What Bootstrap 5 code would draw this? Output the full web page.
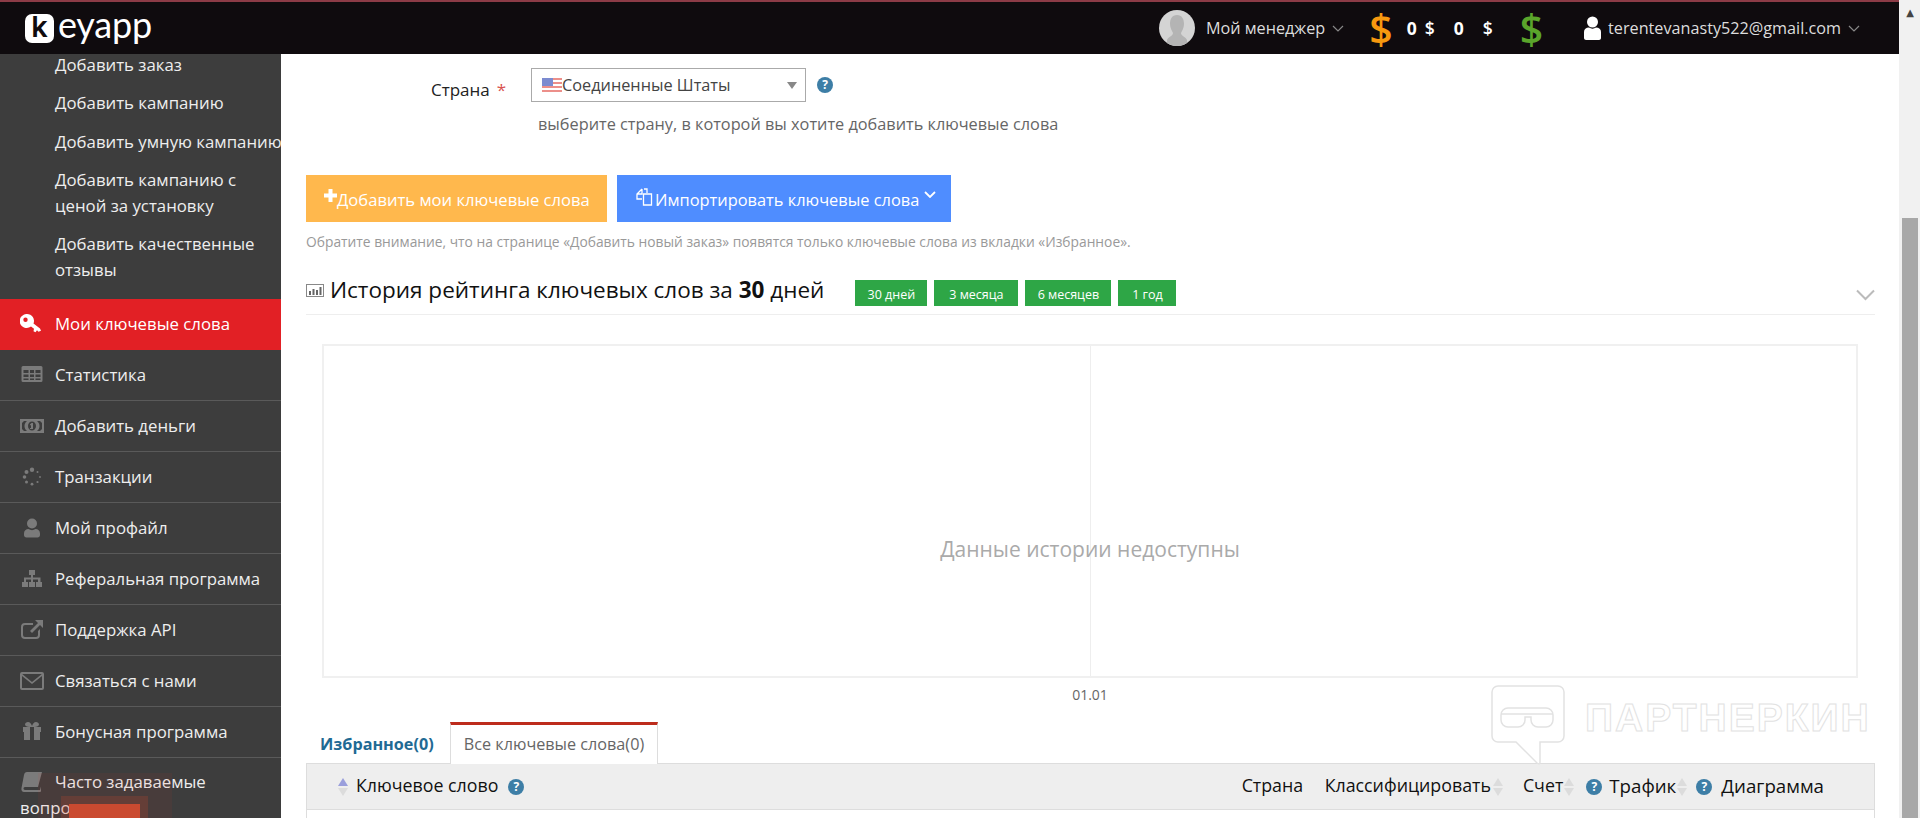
<!DOCTYPE html>
<html lang="ru"><head><meta charset="utf-8"><title>Keyapp</title>
<link href="https://cdn.jsdelivr.net/npm/bootstrap@5.3.0/dist/css/bootstrap.min.css" rel="stylesheet">
<style>
html,body{height:818px;overflow:hidden}
body{font-family:"Open Sans","Noto Sans",sans-serif;font-size:16px;color:#222;background:#fff}
a{text-decoration:none}
.shell{height:818px}
.scroll-track{width:21px;background:#f1f1f1;padding:0 2px 0 3px}
.scroll-arrow{height:218px;color:#444;font-size:10px;line-height:26px;text-align:center;font-family:"DejaVu Sans",sans-serif}
.scroll-thumb{background:#a8a8a8}
.top-bar{height:54px;flex:none;background:#0f0b0e;border-top:2px solid #8c3b46;color:#ddd;padding:0 39px 0 25px}
.logo-k{width:29px;height:29px;background:#fff;color:#0f0b0e;border-radius:7px;font:600 29px/26px "Inter",sans-serif;text-align:center}
.logo-rest{font:400 36px/36px "Lato",sans-serif;color:#fff;margin-left:4px;letter-spacing:-.2px;padding-bottom:8px}
.avatar{width:36px;height:36px;border-radius:50%;background:#d4d4d4;overflow:hidden}
.top-txt{font-size:16.2px;color:#ddd}
.top-chev{margin-left:7px}
.dollar{font-weight:600;font-size:41px;line-height:40px}
.dollar-o{color:#f7990f}.dollar-g{color:#5aa52b}
.bal{font-weight:700;font-size:17.5px;color:#fff;width:10px}
.side{width:281px;background:#3d3d3d;overflow:hidden}
.side-list{margin-top:-9px;padding-bottom:10px}
.sub-link{display:block;color:#eee;padding:6.5px 0 6.5px 55px;line-height:25.5px;font-size:16.8px;white-space:normal}
.sub-link.tight{white-space:nowrap}
.side-item{display:block;color:#eee;height:51px;padding:12px 10px 0 20px;line-height:26px;border-bottom:1px solid #5a5a5a;font-size:16.8px}
.side-item.active-item{background:#e22025;color:#fff;border-bottom-color:#e22025}
.side-item svg{display:inline-block;width:24px;height:20px;margin-right:11px;vertical-align:-4px;fill:#7b7b7b}
.side-item.active-item svg{fill:#fff}
.side-item.last-item{border:0;height:auto;padding-top:11px}
.censor{position:absolute;left:38px;bottom:0;width:134px;height:45px;background:rgba(220,60,40,.07);padding:23px 24px 0 23px}
.censor-mid{height:22px;background:rgba(220,70,40,.2);padding:8px 8px 0 8px}
.censor-in{height:14px;background:#ca4a30}
.content{padding:24px 24px 0 25px;overflow:hidden;position:relative}
.form-line{height:34px}
.lbl{width:225px;flex:none;padding:10px 0 0 125px;line-height:24px;white-space:nowrap;font-size:17px}
.req{color:#d9534f;margin-left:7px}
.sel{width:275px;height:34px;flex:none;border:1px solid #aaa;font-size:16.3px;color:#444;padding:0 7px 0 10px}
.help{width:16px;height:16px;border-radius:50%;background:#3d7ea6;color:#fff;font:700 12px/16px "Open Sans",sans-serif;text-align:center;display:inline-block;flex:none}
.hint{margin:10px 0 0 232px;color:#666;line-height:24px;font-size:16.3px;white-space:nowrap}
.btn-flat{height:47px;border:0;border-radius:0;color:#fff;font-size:16.6px;padding:4px 0 0;line-height:1}
.btn-add{width:301px;background:#ffb84d;padding-left:18px}
.btn-imp{width:334px;background:#4f8dff;padding-left:19px;margin-left:10px;font-size:16.4px}
.btn-row{margin-top:39px}
.btn-flat:hover{color:#fff}
.note{font-size:13.8px;line-height:18px;color:#999;margin-top:11px;white-space:nowrap}
.hist-head{height:50px;margin-top:14px;border-bottom:1px solid #eee;padding-bottom:9px}
.hist-title{font-size:22.5px;line-height:30px;color:#111;margin-left:6px;white-space:nowrap}
.pill{height:26px;background:#2ea646;color:#fff;font-size:12.5px;line-height:30px;text-align:center;margin-top:15px}
.pills{margin-left:31px;gap:7px}
.chart{margin:29px 17px 0 16px;height:334px;border:2px solid #f0f0f0;position:relative}
.chart-half{flex:1}
.chart-half+.chart-half{border-left:1px solid #eee}
.no-data{position:absolute;left:0;right:0;top:189px;text-align:center;color:#aaa;font-size:21px;line-height:28px}
.axis{text-align:center;font-size:14px;color:#666;line-height:16px;margin-top:9px;margin-right:1px}
.tabs-line{margin-top:19px;height:41px}
.tab-fav{width:144px;padding-left:14px;font-weight:700;color:#1f6a94;font-size:16.2px;line-height:44px}
.tab-all{width:208px;border-top:3px solid #bd2c1c;border-left:1px solid #ddd;border-right:1px solid #ddd;background:#fff;color:#666;text-align:center;line-height:38px;font-size:16.2px;height:42px;position:relative;z-index:1}
.t-head{height:47px;background:#eee;border:1px solid #ddd;padding-left:31px;font-size:17.8px;color:#111;line-height:43px;white-space:nowrap}
.wide-lbl{font-size:18.7px}
.t-body{height:20px;border:solid #ddd;border-width:0 1px}
.sort{display:inline-flex;flex-direction:column;gap:2px;width:11px;vertical-align:middle;flex:none}
.sort i{display:block;width:0;height:0;border-left:5.5px solid transparent;border-right:5.5px solid transparent}
.sort .up{border-bottom:8px solid #dcdcdc}.sort .dn{border-top:8px solid #dcdcdc}
.sort .up.on{border-bottom-color:#9a9fdc}
.wm{position:absolute;left:1490px;top:685px;width:400px;height:80px;pointer-events:none}
.wm svg{width:76px;height:80px}
.wm-text{font:700 39px/40px "Liberation Sans",sans-serif;color:transparent;-webkit-text-stroke:1px #e2e2e2;letter-spacing:2px;margin-left:19px;white-space:nowrap}
</style></head>
<body>
<div class="shell d-flex">
 <div class="flex-grow-1 d-flex flex-column" style="min-width:0">
  <header class="top-bar d-flex align-items-center">
   <div class="d-flex align-items-center"><div class="logo-k">k</div><div class="logo-rest">eyapp</div></div>
   <div class="ms-auto d-flex align-items-center">
    <div class="avatar"><svg viewBox="0 0 36 36" width="36" height="36"><path fill="#b4b4b4" d="M18 5c5 0 7 4 7 9 0 4-2 7-3 9 0 3 5 4 6 7v6H8v-6c1-3 6-4 6-7-1-2-3-5-3-9 0-5 2-9 7-9z"/></svg></div>
    <span class="top-txt" style="margin-left:11px">Мой менеджер</span>
    <svg class="top-chev" width="12" height="7" viewBox="0 0 12 7"><path d="M1 1l5 5 5-5" fill="none" stroke="#888" stroke-width="1.2"/></svg>
    <span class="dollar dollar-o" style="margin-left:25px">$</span>
    <span class="bal" style="margin-left:14px">0</span>
    <span class="bal" style="margin-left:8px;font-weight:600">$</span>
    <span class="bal" style="margin-left:19px">0</span>
    <span class="bal" style="margin-left:19px;font-weight:600">$</span>
    <span class="dollar dollar-g" style="margin-left:27px">$</span>
    <svg style="margin-left:41px" width="17" height="24" viewBox="0 0 17 24"><circle cx="8.5" cy="6" r="5.5" fill="#fff"/><path fill="#fff" d="M0 16c0-3 2-4.500 5-4.500 2 1.500 5 1.500 7 0 3 0 5 1.500 5 4.500v6c0 1-1 2-2 2H2c-1 0-2-1-2-2z"/></svg>
    <span class="top-txt" style="margin-left:7px">terentevanasty522@gmail.com</span>
    <svg class="top-chev" width="12" height="7" viewBox="0 0 12 7"><path d="M1 1l5 5 5-5" fill="none" stroke="#888" stroke-width="1.2"/></svg>
   </div>
  </header>
  <div class="d-flex flex-grow-1" style="min-height:0;position:relative">
   <nav class="side flex-none position-relative">
    <div class="side-list">
     <a class="sub-link" href="#">Добавить заказ</a>
     <a class="sub-link" href="#">Добавить кампанию</a>
     <a class="sub-link tight" href="#">Добавить умную кампанию</a>
     <a class="sub-link" href="#">Добавить кампанию с ценой за установку</a>
     <a class="sub-link" href="#">Добавить качественные отзывы</a>
    </div>
    <a class="side-item active-item" href="#"><svg viewBox="0 0 24 20"><path fill-rule="evenodd" d="M7 0a7 7 0 0 1 6.500 9.600L20 14.500l1 2.300-2.500 1-1.500-1.500-1.500 2-2-1 .5-2.500-3-2.300A7 7 0 1 1 7 0zM5.500 3.500a2.200 2.200 0 1 0 0 4.400 2.200 2.200 0 0 0 0-4.400z"/></svg>Мои ключевые слова</a>
    <a class="side-item" href="#"><svg viewBox="0 0 24 20"><path fill-rule="evenodd" d="M3 1h18a1.500 1.500 0 0 1 1.500 1.500v13A1.500 1.500 0 0 1 21 17H3a1.500 1.500 0 0 1-1.500-1.500v-13A1.500 1.500 0 0 1 3 1zm.5 4v3h5V5zm6.500 0v3h4V5zm5.500 0v3h5V5zM3.500 9.500v2.500h5V9.500zm6.500 0v2.500h4V9.500zm5.500 0v2.500h5V9.500zM3.500 13.500V15h5v-1.500zm6.500 0V15h4v-1.500zm5.500 0V15h5v-1.500z"/></svg>Статистика</a>
    <a class="side-item" href="#"><svg viewBox="0 0 24 20"><path fill-rule="evenodd" d="M0 3h24v14H0zm4 2L2 7v6l2 2h3c-1.500-1-2.500-3-2.500-5S5.500 6 7 5zm13 0c1.500 1 2.500 3 2.500 5s-1 4-2.500 5h3l2-2V7l-2-2zm-5 .5a4 4.500 0 1 0 0 9 4 4.500 0 0 0 0-9zm-.5 1.500h1.500v5H13v1h-3v-1h1V9l-1 .5V8.500z"/></svg>Добавить деньги</a>
    <a class="side-item" href="#"><svg viewBox="0 0 24 20"><circle cx="12" cy="2.800" r="2.200"/><circle cx="6.500" cy="5" r="2"/><circle cx="17.500" cy="5" r="1"/><circle cx="4.500" cy="10" r="1.800"/><circle cx="20" cy="10" r=".9"/><circle cx="6.500" cy="15" r="1.500"/><circle cx="17.500" cy="15" r="1.100"/><circle cx="12" cy="17.200" r="1.400"/></svg>Транзакции</a>
    <a class="side-item" href="#"><svg viewBox="0 0 24 20"><circle cx="12" cy="5.500" r="5"/><path d="M4 15.500c0-3 2-4.500 4.500-4.500 2 1.500 5 1.500 7 0 2.500 0 4.500 1.500 4.500 4.500V17c0 1.500-1 2.500-2.500 2.500h-11C5 19.500 4 18.500 4 17z"/></svg>Мой профайл</a>
    <a class="side-item" href="#"><svg viewBox="0 0 24 20"><path d="M9 1h6v5h-2v2.500h7.500V13H22v5h-6v-5h2v-2.500h-5V13h2v5H9v-5h2v-2.500H6V13h2v5H2v-5h2V8.500h7V6H9z"/></svg>Реферальная программа</a>
    <a class="side-item" href="#"><svg viewBox="0 0 24 20"><path d="M5 3h8v2H5a2 2 0 0 0-2 2v8a2 2 0 0 0 2 2h11a2 2 0 0 0 2-2v-4l2-2v6a4 4 0 0 1-4 4H5a4 4 0 0 1-4-4V7a4 4 0 0 1 4-4z"/><path d="M15 0h8v8l-3-3-8 8-2-2 8-8z"/></svg>Поддержка API</a>
    <a class="side-item" href="#"><svg viewBox="0 0 24 20"><path fill-rule="evenodd" d="M2 1h20a2 2 0 0 1 2 2v14a2 2 0 0 1-2 2H2a2 2 0 0 1-2-2V3a2 2 0 0 1 2-2zm.2 2 9.800 8 9.800-8zM2 5v12h20V5l-10 8z"/></svg>Связаться с нами</a>
    <a class="side-item" href="#"><svg viewBox="0 0 24 20"><path fill-rule="evenodd" d="M3 5h6.500C7 5 5 4 5 2.500S6.500 0 8 0c2 0 3.300 2 4 4 .7-2 2-4 4-4 1.500 0 3 1 3 2.500S17 5 14.500 5H21v5h-1v8H4v-8H3zM10 5v13h4V5z"/></svg>Бонусная программа</a>
    <a class="side-item last-item" href="#"><svg viewBox="0 0 24 20"><path d="M7 0h15l-4 15H5c-1 0-1.500 1-1.500 1.500S4 18 5 18h15l1-3.500V19a1 1 0 0 1-1 1H4c-2 0-3-2-2.500-4L4 3c.3-2 1.500-3 3-3z"/></svg>Часто задаваемые вопросы</a>
    <div class="censor"><div class="censor-mid"><div class="censor-in"></div></div></div>
   </nav>
   <main class="content flex-grow-1" style="min-width:0">
    <div class="form-line d-flex align-items-start" style="margin-top:-10px">
     <div class="lbl">Страна<span class="req">*</span></div>
     <div class="sel d-flex align-items-center">
      <svg width="20" height="14" viewBox="0 0 20 14" class="me-0 flex-none"><rect width="20" height="14" fill="#fff"/><path fill="#ec8f8a" d="M0 0h20v2H0zM0 4h20v2H0zM0 8h20v2H0zM0 12h20v2H0z"/><rect width="11" height="8" fill="#7c8bd0"/></svg>
      <span>Соединенные Штаты</span>
      <span class="ms-auto" style="width:0;height:0;border-left:5px solid transparent;border-right:5px solid transparent;border-top:7px solid #888;margin-right:1px"></span>
     </div>
     <span class="help" style="margin:9px 0 0 11px">?</span>
    </div>
    <div class="hint">выберите страну, в которой вы хотите добавить ключевые слова</div>
    <div class="btn-row d-flex">
     <button class="btn btn-flat btn-add text-start d-flex align-items-center">
      <svg style="margin-bottom:10px" width="13" height="13" viewBox="0 0 13 13"><path fill="#fff" d="M4.500 0h4v4.500H13v4H8.500V13h-4V8.500H0v-4h4.500z"/></svg>
      <span>Добавить мои ключевые слова</span></button>
     <button class="btn btn-flat btn-imp text-start d-flex align-items-center">
      <svg style="margin-bottom:8px" width="19" height="18" viewBox="0 0 19 18"><path d="M6 1L1 6v5h5M6 1v5H1M8 1h3v4M7.500 6h4l4 0v11h-8z" fill="none" stroke="#fff" stroke-width="1.300"/></svg>
      <span>Импортировать ключевые слова</span>
      <svg style="margin:0 0 12px 5px" width="12" height="7" viewBox="0 0 12 7"><path d="M1 1l5 5 5-5" fill="none" stroke="#fff" stroke-width="1.800"/></svg>
     </button>
    </div>
    <div class="note">Обратите внимание, что на странице «Добавить новый заказ» появятся только ключевые слова из вкладки «Избранное».</div>
    <div class="hist-head d-flex align-items-start">
     <svg style="margin-top:19px" width="18" height="13" viewBox="0 0 18 13"><rect x=".5" y=".5" width="17" height="12" fill="#fff" stroke="#888"/><path fill="#666" d="M3 7h2v4H3zM6.500 5h2v6h-2zM10 6h2v5h-2zM13.500 3h2v8h-2z"/></svg>
     <div class="hist-title" style="margin-top:10px">История рейтинга ключевых слов за <b>30</b> дней</div>
     <div class="pills d-flex">
      <div class="pill" style="width:72px">30 дней</div><div class="pill" style="width:84px">3 месяца</div><div class="pill" style="width:86px">6 месяцев</div><div class="pill" style="width:58px">1 год</div>
     </div>
     <svg class="ms-auto" style="margin-top:24px" width="19" height="12" viewBox="0 0 19 12"><path d="M1 1.500l8.500 8.500 8.500-8.500" fill="none" stroke="#bbb" stroke-width="2"/></svg>
    </div>
    <div class="chart d-flex">
     <div class="chart-half"></div><div class="chart-half"></div>
     <div class="no-data">Данные истории недоступны</div>
    </div>
    <div class="axis">01.01</div>
    <div class="tabs-line d-flex">
     <div class="tab-fav">Избранное(0)</div>
     <div class="tab-all">Все ключевые слова(0)</div>
    </div>
    <div class="t-head d-flex">
     <span class="sort align-self-center" style="margin-right:7px"><i class="up on"></i><i class="dn"></i></span>
     <span>Ключевое слово</span>
     <span class="help align-self-center" style="margin-left:10px">?</span>
     <span style="margin-left:auto;width:83px">Страна</span>
     <span>Классифицировать</span>
     <span class="sort align-self-center" style="margin:0 19px 0 2px"><i class="up"></i><i class="dn"></i></span>
     <span>Счет</span>
     <span class="sort align-self-center" style="margin:0 11px 0 1px"><i class="up"></i><i class="dn"></i></span>
     <span class="help align-self-center" style="margin-right:7px">?</span>
     <span class="wide-lbl">Трафик</span>
     <span class="sort align-self-center" style="margin:0 8px 0 1px"><i class="up"></i><i class="dn"></i></span>
     <span class="help align-self-center" style="margin-right:9px">?</span>
     <span class="wide-lbl" style="margin-right:50px">Диаграмма</span>
    </div>
    <div class="t-body"></div>
   </main>
  </div>
 </div>
 <div class="scroll-track d-flex flex-column flex-none">
  <div class="scroll-arrow">▲</div>
  <div class="scroll-thumb flex-grow-1"></div>
 </div>
</div>
<div class="wm d-flex align-items-start">
 <svg viewBox="0 0 76 80"><path d="M8 1h60a6 6 0 0 1 6 6v44a6 6 0 0 1-6 6H50v20q0 3-3 1L26 57H8a6 6 0 0 1-6-6V7a6 6 0 0 1 6-6z" fill="none" stroke="#e2e2e2" stroke-width="1.500"/><path d="M11 30a7 7 0 0 1 7-7h38a7 7 0 0 1 7 7v5a7 7 0 0 1-7 7h-8a7 7 0 0 1-7-7v-3h-6v3a7 7 0 0 1-7 7h-10a7 7 0 0 1-7-7zM11 29h52" fill="none" stroke="#e2e2e2" stroke-width="1.500"/></svg>
 <div class="wm-text" style="margin-top:13px">ПАРТНЕРКИН</div>
</div>
</body></html>
